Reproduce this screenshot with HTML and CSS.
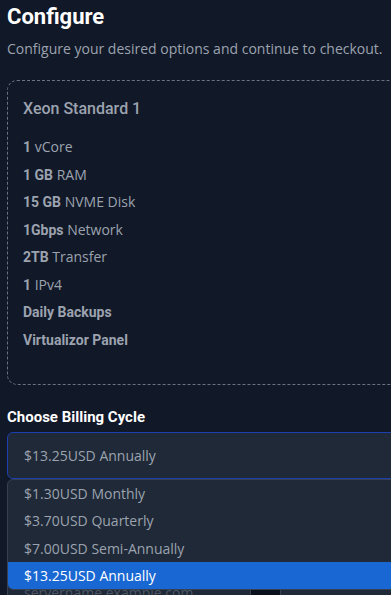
FILE: index.html
```html
<!DOCTYPE html>
<html lang="en">

<head>
    <meta charset="UTF-8">
    <meta name="viewport" content="width=device-width, initial-scale=1.0">
    <title>Configure</title>
    <link rel="stylesheet" href="styles.css">
</head>

<body>
    <div class="page">
        <h1 class="title">Configure</h1>
        <p class="lead">Configure your desired options and continue to checkout.</p>

        <div class="product">
            <h2 class="product-name">Xeon Standard 1</h2>
            <ul class="specs">
                <li><b>1</b> vCore</li>
                <li><b>1 GB</b> RAM</li>
                <li><b>15 GB</b> NVME Disk</li>
                <li><b>1Gbps</b> Network</li>
                <li><b>2TB</b> Transfer</li>
                <li><b>1</b> IPv4</li>
                <li><b>Daily Backups</b></li>
                <li><b>Virtualizor Panel</b></li>
            </ul>
        </div>

        <label class="field-label">Choose Billing Cycle</label>
        <div class="select-wrap">
            <div class="select">$13.25USD Annually</div>

            <!-- open native list -->
            <ul class="options">
                <li>$1.30USD Monthly</li>
                <li>$3.70USD Quarterly</li>
                <li>$7.00USD Semi-Annually</li>
                <li class="selected">$13.25USD Annually</li>
            </ul>
        </div>

        <div class="host-row">
            <input type="text" class="host" placeholder="servername.example.com">
            <span class="host-sep"></span>
            <input type="text" class="host host-small">
        </div>
    </div>
</body>

</html>
```

FILE: styles.css
```css
* {
    padding: 0;
    margin: 0;
    box-sizing: border-box;
}

body {
    background: #111827;
    overflow: hidden;
    font-family: "Open Sans", "Liberation Sans", sans-serif;
}

div.page {
    width: 430px;
    padding: 3px 0 0 7px;
}

h1.title {
    font-family: Roboto, "Liberation Sans", sans-serif;
    font-size: 22px;
    font-weight: 700;
    line-height: 28px;
    color: #ffffff;
}

p.lead {
    margin-top: 8px;
    font-size: 14px;
    line-height: 20px;
    color: #9ca3af;
    white-space: nowrap;
}

div.product {
    margin-top: 21px;
    padding: 16px 15px 31px 15px;
    border: 1px dashed #6b7280;
    border-radius: 10px;
    height: 305px;
}

h2.product-name {
    font-family: Roboto, "Liberation Sans", sans-serif;
    font-size: 16px;
    font-weight: 500;
    line-height: 24px;
    color: #9ca3af;
}

ul.specs {
    list-style: none;
    margin-top: 12px;
}

ul.specs li {
    height: 27.5px;
    font-size: 14px;
    line-height: 27px;
    color: #9ca3af;
}

ul.specs b {
    font-family: Roboto, "Liberation Sans", sans-serif;
    font-weight: 700;
    line-height: 1;
}

label.field-label {
    display: block;
    margin-top: 22px;
    font-family: Roboto, "Liberation Sans", sans-serif;
    font-size: 15px;
    font-weight: 700;
    line-height: 20px;
    color: #ffffff;
}

div.select-wrap {
    position: relative;
    margin-top: 5px;
    z-index: 2;
}

div.select {
    height: 47px;
    padding: 0 16px;
    background: #1f2937;
    border: 1px solid #1e40af;
    border-radius: 6px;
    font-size: 14px;
    line-height: 45px;
    color: #9ca3af;
}

ul.options {
    position: absolute;
    top: 47px;
    left: 0;
    right: 0;
    list-style: none;
    background: #1f2937;
    border: 1px solid #374151;
    border-radius: 6px;
    overflow: hidden;
}

ul.options li {
    height: 27.25px;
    padding: 0 16px;
    font-size: 14px;
    line-height: 27px;
    color: #9ca3af;
}

ul.options li.selected {
    background: #1967d2;
    color: #ffffff;
}

div.host-row {
    display: flex;
    margin-top: 90px;
}

input.host {
    width: 247px;
    height: 46px;
    padding: 0 16px;
    background: #1f2937;
    border: 1px solid #374151;
    font-family: "Open Sans", "Liberation Sans", sans-serif;
    font-size: 14px;
    outline: none;
}

input.host::placeholder {
    color: #4b5563;
}

span.host-sep {
    width: 30px;
    height: 46px;
    background: #0b111c;
    border-top: 1px solid #374151;
}

input.host-small {
    width: 150px;
}
```
